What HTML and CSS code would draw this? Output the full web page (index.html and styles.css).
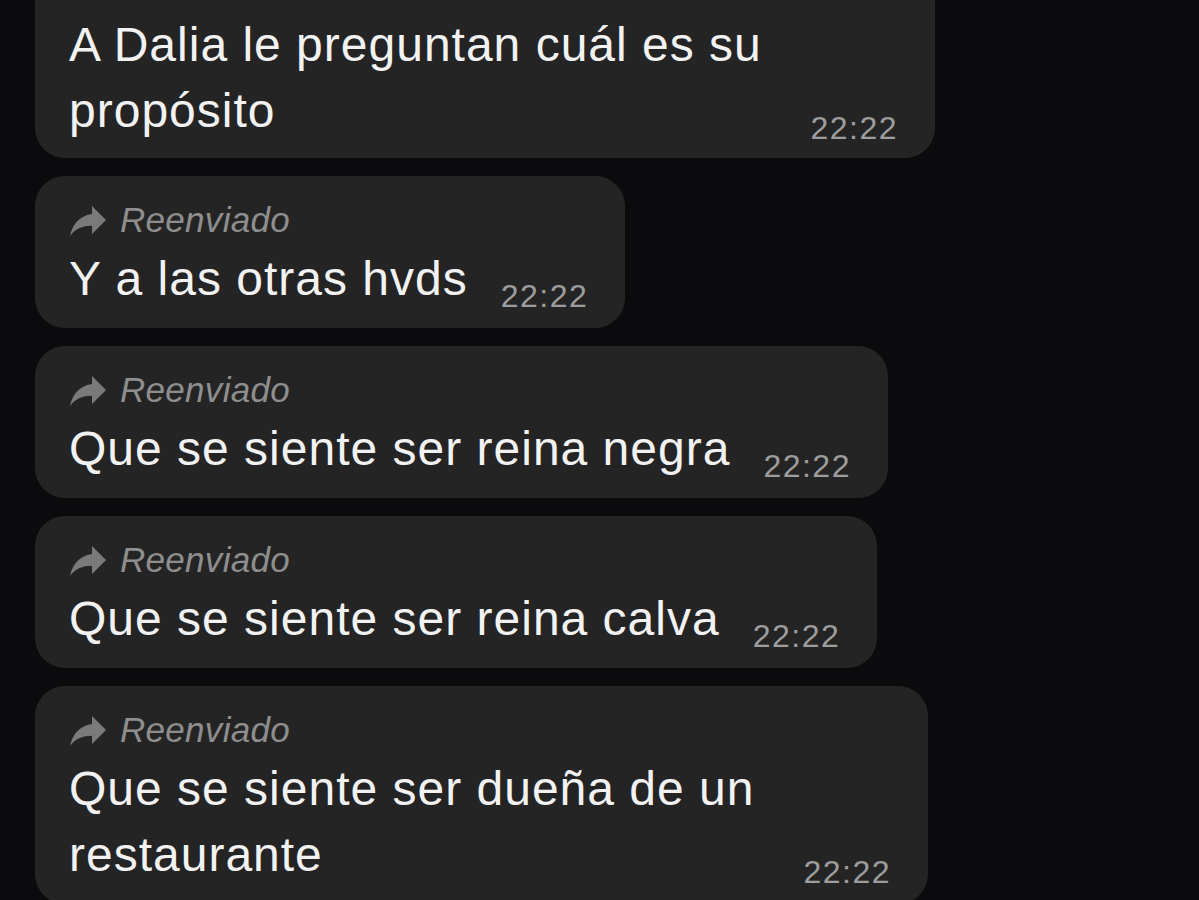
FILE: index.html
```html
<!DOCTYPE html>
<html lang="es">
<head>
<meta charset="utf-8">
<title>Chat</title>
<link rel="stylesheet" href="styles.css">
</head>
<body>
<main class="chat">
  <div class="bubble cut wrap">
    <div class="body">
      <p class="text">A Dalia le preguntan cuál es su propósito</p>
      <span class="time">22:22</span>
    </div>
  </div>

  <div class="bubble">
    <div class="fwd">
      <svg class="fwd-icon" viewBox="3 4 18 16" aria-hidden="true"><path d="M14 9V5l7 7-7 7v-4.1c-5 0-8.5 1.6-11 5.1 1-5 4-10 11-11z"/></svg>
      <span>Reenviado</span>
    </div>
    <div class="body">
      <p class="text">Y a las otras hvds</p>
      <span class="time">22:22</span>
    </div>
  </div>

  <div class="bubble">
    <div class="fwd">
      <svg class="fwd-icon" viewBox="3 4 18 16" aria-hidden="true"><path d="M14 9V5l7 7-7 7v-4.1c-5 0-8.5 1.6-11 5.1 1-5 4-10 11-11z"/></svg>
      <span>Reenviado</span>
    </div>
    <div class="body">
      <p class="text">Que se siente ser reina negra</p>
      <span class="time">22:22</span>
    </div>
  </div>

  <div class="bubble">
    <div class="fwd">
      <svg class="fwd-icon" viewBox="3 4 18 16" aria-hidden="true"><path d="M14 9V5l7 7-7 7v-4.1c-5 0-8.5 1.6-11 5.1 1-5 4-10 11-11z"/></svg>
      <span>Reenviado</span>
    </div>
    <div class="body">
      <p class="text">Que se siente ser reina calva</p>
      <span class="time">22:22</span>
    </div>
  </div>

  <div class="bubble wrap">
    <div class="fwd">
      <svg class="fwd-icon" viewBox="3 4 18 16" aria-hidden="true"><path d="M14 9V5l7 7-7 7v-4.1c-5 0-8.5 1.6-11 5.1 1-5 4-10 11-11z"/></svg>
      <span>Reenviado</span>
    </div>
    <div class="body">
      <p class="text">Que se siente ser dueña de un restaurante</p>
      <span class="time">22:22</span>
    </div>
  </div>
</main>
</body>
</html>
```

FILE: styles.css
```css
html, body {
  margin: 0;
  padding: 0;
  background: #0b0b0d;
  height: 100%;
  overflow: hidden;
}

body {
  font-family: "Liberation Sans", Arial, sans-serif;
  color: #f2f2f2;
}

.chat {
  display: flex;
  flex-direction: column;
  align-items: flex-start;
  gap: 18px;
  margin-top: -40px;
  padding-left: 35px;
}

.bubble {
  background: #242424;
  border-radius: 30px;
  padding: 22px 37px 16px 34px;
  display: flex;
  flex-direction: column;
  box-sizing: border-box;
}

.bubble.cut {
  padding-top: 52px;
  padding-bottom: 14px;
  width: 900px;
}

.bubble.wrap:not(.cut) {
  width: 893px;
}

.fwd {
  display: flex;
  align-items: center;
  height: 44px;
  margin-bottom: 4px;
  color: #8e8e8e;
  font-style: italic;
  font-size: 35px;
  letter-spacing: 0.3px;
}

.fwd-icon {
  width: 36px;
  height: 32px;
  fill: #7a7a7a;
  margin-right: 14px;
  margin-left: 1px;
  flex: none;
}

.body {
  display: flex;
  align-items: flex-end;
}

.text {
  margin: 0;
  font-size: 48px;
  line-height: 66px;
  letter-spacing: 1px;
  flex: 0 1 auto;
  max-width: 720px;
}

.time {
  flex: none;
  margin-left: auto;
  padding-left: 33px;
  font-size: 32px;
  line-height: 40px;
  letter-spacing: 1.5px;
  color: #9d9d9d;
  margin-bottom: -4px;
}
```
